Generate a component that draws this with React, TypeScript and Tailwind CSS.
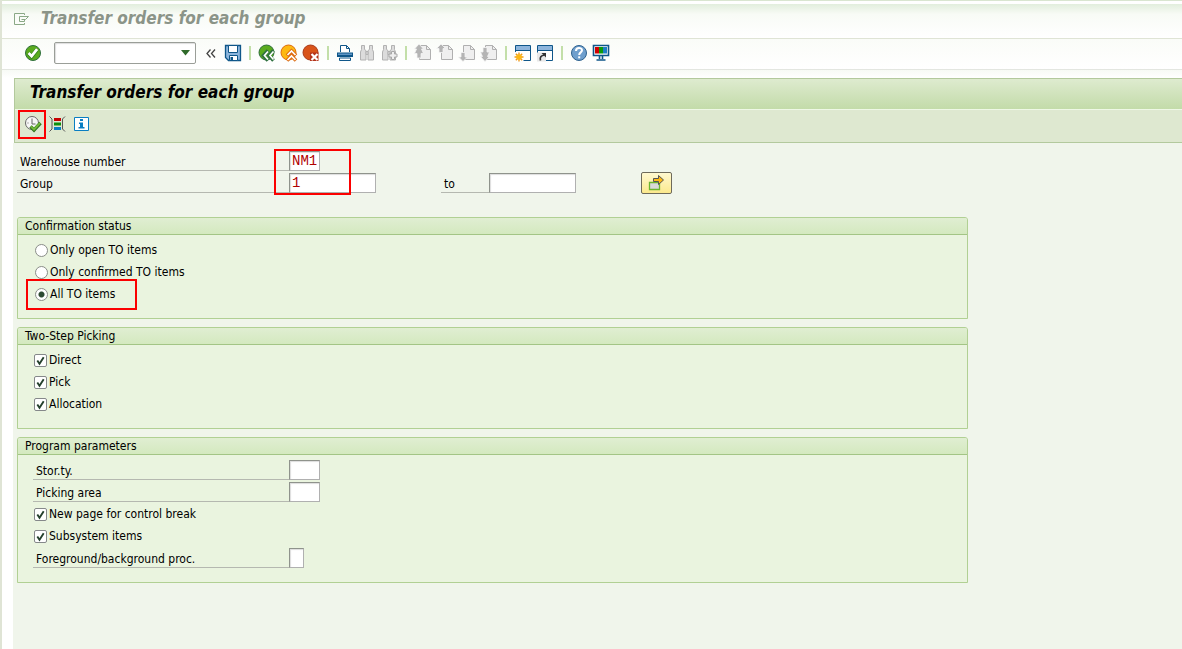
import type { ReactNode } from "react";

function Icon({ children }: { children: ReactNode }) {
  return (
    <svg width="18" height="18" viewBox="0 0 18 18" fill="none" aria-hidden="true" className="shrink-0">
      {children}
    </svg>
  );
}

const CheckIcon = () => (
  <Icon>
    <circle cx="9" cy="9" r="7.5" fill="#5aab1e" stroke="#2f6f3c" />
    <path d="M4.5 9.2l3 3.2 5.6-7" stroke="#2f7d1c" strokeWidth="4" />
    <path d="M4.6 9l3 3.2 5.5-7" stroke="#fff" strokeWidth="2.8" />
  </Icon>
);

const CollapseIcon = () => (
  <Icon>
    <path d="M8.500 5.500L5 9.500l3.500 4M13 5.500l-3.500 4 3.500 4" stroke="#444" strokeWidth="1.300" />
  </Icon>
);

const SaveIcon = () => (
  <Icon>
    <path d="M1.500 1.500h15v15h-12l-3-3z" fill="#8db5dc" stroke="#0f5689" strokeWidth="1.300" />
    <path d="M4.500 1.500h9v7h-9z" fill="#fff" stroke="#0f5689" />
    <path d="M5.500 11.500h8v5h-8z" fill="#fff" stroke="#0f5689" />
    <path d="M6.500 13h2.500v3.500h-2.500z" fill="#0f5689" />
  </Icon>
);

const BackIcon = () => (
  <Icon>
    <circle cx="8.500" cy="8.500" r="7.500" fill="#5aab1e" stroke="#2f6f3c" />
    <path d="M10 6.500L5.500 11.500l4.500 5M15.500 6.500L11 11.500l4.500 5" stroke="#2f7040" strokeWidth="3.600" />
    <path d="M10 7.500l-3.500 4 3.500 4M15.500 7.500l-3.500 4 3.500 4" stroke="#fff" strokeWidth="1.700" />
  </Icon>
);

const ExitIcon = () => (
  <Icon>
    <circle cx="8.500" cy="8.500" r="7.500" fill="#fdb913" stroke="#dd6b10" />
    <path d="M7 11.500l4.500-4.500 4.500 4.500M7 16.500l4.500-4.500 4.500 4.500" stroke="#dd6b10" strokeWidth="3.600" />
    <path d="M7.500 11l4-4 4 4M7.500 16l4-4 4 4" stroke="#fff" strokeWidth="1.700" />
  </Icon>
);

const CancelIcon = () => (
  <Icon>
    <circle cx="8.500" cy="8.500" r="7.500" fill="#d9541a" stroke="#a83a1a" />
    <path d="M8 8.500h8.500V17H8z" fill="#b4341a" />
    <path d="M9.500 10l6 6M15.500 10l-6 6" stroke="#fff" strokeWidth="2.200" />
  </Icon>
);

const PrintIcon = () => (
  <Icon>
    <path d="M4.500 8V1.500h6l3 3V8" fill="#fff" stroke="#0f5689" />
    <path d="M10.500 1.500v3h3" stroke="#0f5689" />
    <path d="M1 8.500h16v4.500H1z" fill="#0f5689" />
    <path d="M2 9.500h14v1.500H2z" fill="#5d94c4" />
    <path d="M3.500 14h11v2.500h-11z" fill="#fff" stroke="#0f5689" />
  </Icon>
);

const Binoculars = () => (
  <g fill="#dcdcdc" stroke="#b2b2b2">
    <path d="M3.500 1.500h3v4l1.500 1v9.500h-5.500v-8l1-2.500z" />
    <path d="M14.500 1.500h-3v4l-1.500 1v9.500h5.500v-8l-1-2.500z" />
    <path d="M8 7.500h2v3H8z" />
  </g>
);

const FindIcon = () => (
  <Icon>
    <Binoculars />
  </Icon>
);

const FindNextIcon = () => (
  <Icon>
    <Binoculars />
    <path d="M11.500 7.500h3v2.500h2.500v3h-2.500v2.500h-3v-2.500H9v-3h2.500z" fill="#eee" stroke="#a8a8a8" />
  </Icon>
);

function PageIcon({ arrows }: { arrows: string }) {
  return (
    <Icon>
      <path d="M5.500 1.500h7l4 4v10h-11z" fill="#efefef" stroke="#b0b0b0" />
      <path d="M12.500 1.500v4h4" stroke="#b0b0b0" />
      <path d={arrows} fill="#b4b4b4" stroke="#f5f5f5" strokeWidth="0.800" />
    </Icon>
  );
}

const WindowBase = () => (
  <>
    <path d="M1.500 1.500h15v15h-15z" fill="#fff" stroke="#0f5689" />
    <path d="M2 2h14v4H2z" fill="#8db5dc" />
    <path d="M1.500 6.500h15" stroke="#0f5689" />
  </>
);

const NewSessionIcon = () => (
  <Icon>
    <WindowBase />
    <path d="M0 8h9.500v10H0z" fill="#fff" />
    <path d="M5 8.500v9M.5 13h9M1.800 9.800l6.400 6.400M8.200 9.800l-6.400 6.400" stroke="#f09a1a" strokeWidth="1.400" />
    <circle cx="5" cy="13" r="2.800" fill="#fdb913" />
  </Icon>
);

const ShortcutIcon = () => (
  <Icon>
    <WindowBase />
    <path d="M1 8.500h9v9H1z" fill="#e8e8e8" />
    <path d="M4.500 16.500c-1-3 .5-5 4-5.500" stroke="#333" strokeWidth="1.700" />
    <path d="M5.500 9H10v4.500z" fill="#333" />
  </Icon>
);

const HelpIcon = () => (
  <Icon>
    <circle cx="9" cy="9" r="7.500" fill="#6f9fcd" stroke="#2f628f" />
    <path d="M6 7c0-4 6-3.800 6-.7C12 8.500 9.200 8.300 9.200 11" stroke="#fff" strokeWidth="2" />
    <path d="M8.200 12.300h2v2h-2z" fill="#fff" />
  </Icon>
);

const MonitorIcon = () => (
  <Icon>
    <path d="M1.500 1.500h15v10h-15z" fill="#fff" stroke="#0f5689" strokeWidth="1.600" />
    <path d="M3 3h4v6.500H3z" fill="#d00000" />
    <path d="M7 3h4v6.500H7z" fill="#0d9a0d" />
    <path d="M11 3h4v6.500h-4z" fill="#1f7fc4" />
    <path d="M7.500 12v3M10.500 12v3M4.500 16h9" stroke="#0f5689" strokeWidth="1.600" />
  </Icon>
);

const ExecuteIcon = () => (
  <Icon>
    <circle cx="8" cy="8" r="6.500" fill="#f7f7f7" stroke="#666" />
    <path d="M8 3.500V9h3.500M3.500 8h1M8 12v1.500" stroke="#666" />
    <path d="M6.500 11.500l3.500 3.500 6.500-7" stroke="#2f6f1c" strokeWidth="3.400" />
    <path d="M7 11.500l3 3 6-6.500" stroke="#72b83a" strokeWidth="2" />
  </Icon>
);

const VariantIcon = () => (
  <Icon>
    <path d="M1.500 1.500l2.500 2.500v10l-2.500 2.500M17 1.500L14.500 4v10l2.500 2.500" stroke="#555" />
    <path d="M6 3h7v3H6z" fill="#c80000" />
    <path d="M6 7.500h7v3H6z" fill="#0b8f0b" />
    <path d="M6 12h7v3H6z" fill="#0a7ec2" />
  </Icon>
);

const InfoIcon = () => (
  <Icon>
    <path d="M2.500 2.500h14v13h-14z" fill="#fff" stroke="#0a7ec2" />
    <path d="M8 4h3v2H8zM7 7.500h4V12h1.500v1.500h-6V12H8V9H7z" fill="#0a7ec2" />
  </Icon>
);

const MultipleIcon = () => (
  <Icon>
    <path d="M1.500 8.500h10v7h-10z" fill="#d9d9d9" stroke="#6cb52d" strokeWidth="1.300" />
    <path d="M5.500 4.500h5v-3l5 4.500-5 4.500v-3h-5z" fill="#fdb913" stroke="#555" />
  </Icon>
);

const UP = "M5 0L9.500 4.500H7V8.500H3V4.500H.5z";
const DOWN = "M5 17.500L.5 13H3V8.500h4V13h2.500z";
const DOUBLE_UP = "M5 0L9.500 5H7.500l2 4.500H7V14H3V9.500H.5L2.500 5H.5z";
const DOUBLE_DOWN = "M5 17.500L.5 12.500h2L.5 8H3V3.500h4V8h2.500l-2 4.500h2z";

const toolbarGroups = [
  [
    { name: "Back", icon: <BackIcon /> },
    { name: "Exit", icon: <ExitIcon /> },
    { name: "Cancel", icon: <CancelIcon /> },
  ],
  [
    { name: "Print", icon: <PrintIcon /> },
    { name: "Find", icon: <FindIcon />, disabled: true },
    { name: "Find next", icon: <FindNextIcon />, disabled: true },
  ],
  [
    { name: "First page", icon: <PageIcon arrows={DOUBLE_UP} />, disabled: true },
    { name: "Previous page", icon: <PageIcon arrows={UP} />, disabled: true },
    { name: "Next page", icon: <PageIcon arrows={DOWN} />, disabled: true },
    { name: "Last page", icon: <PageIcon arrows={DOUBLE_DOWN} />, disabled: true },
  ],
  [
    { name: "New session", icon: <NewSessionIcon /> },
    { name: "Create shortcut", icon: <ShortcutIcon /> },
  ],
  [
    { name: "Help", icon: <HelpIcon /> },
    { name: "Customize layout", icon: <MonitorIcon /> },
  ],
];

function ToolButton({ name, icon, disabled }: { name: string; icon: ReactNode; disabled?: boolean }) {
  return (
    <button type="button" aria-label={name} disabled={disabled} className="flex h-6 w-[22px] shrink-0 items-center justify-center">
      {icon}
    </button>
  );
}

const fieldClass =
  "h-5 border border-[#b0b0b0] border-t-[#8f938c] border-l-[#8f938c] bg-white px-0.5 font-['Liberation_Mono',monospace] text-[14px] text-[#b00000] shadow-[inset_1px_1px_1px_#dddddd] outline-none";

const fieldWidths = { flag: "w-[15px]", short: "w-[31px]", long: "w-[87px]" };

function Field({ id, label, size, value = "" }: { id: string; label: string; size: keyof typeof fieldWidths; value?: string }) {
  return (
    <div className="flex h-[22px] flex-1 items-center">
      <label htmlFor={id} className="h-5 flex-1 border-b border-[#b5b8b0] pl-[3px] leading-[22px]">
        {label}
      </label>
      <input id={id} defaultValue={value} className={`${fieldClass} ${fieldWidths[size]}`} />
    </div>
  );
}

function Radio({ label, checked }: { label: string; checked?: boolean }) {
  return (
    <label className="flex h-[22px] w-fit items-center gap-0.5 pl-0.5">
      <input
        type="radio"
        name="confirmation"
        defaultChecked={checked}
        className="size-[13px] appearance-none rounded-full border border-[#8a8d88] bg-white checked:bg-[radial-gradient(circle,#2d4a32_0_2.5px,#ffffff_3.5px)]"
      />
      {label}
    </label>
  );
}

function Check({ label }: { label: string }) {
  return (
    <label className="flex h-[22px] w-fit items-center gap-0.5 pl-px">
      <span className="grid">
        <input type="checkbox" defaultChecked className="peer col-start-1 row-start-1 size-[13px] appearance-none rounded-[2px] border border-[#85888a] bg-white" />
        <svg viewBox="0 0 13 13" fill="none" aria-hidden="true" className="pointer-events-none invisible col-start-1 row-start-1 size-[13px] peer-checked:visible">
          <path d="M3.300 6.500l2.200 3.200 4.200-6.500" stroke="#24402c" strokeWidth="1.900" />
        </svg>
      </span>
      {label}
    </label>
  );
}

function Group({ title, children }: { title: string; children: ReactNode }) {
  return (
    <fieldset className="min-w-0 rounded-t-[3px] border border-[#b1d093] bg-[#eaf4df] pb-[13px]">
      <legend className="float-left mb-[3px] h-[17px] w-full rounded-t-[2px] border-b border-[#a3c585] bg-linear-to-b from-[#e0eed2] to-[#d4e9bf] pl-[7px] leading-4">
        {title}
      </legend>
      <div className="clear-both pt-px pl-[15px]">{children}</div>
    </fieldset>
  );
}

function Highlight({ className }: { className: string }) {
  return <span aria-hidden="true" className={`pointer-events-none absolute border-2 border-[#fb0000] ${className}`} />;
}

export default function App() {
  return (
    <div className="flex min-h-screen flex-col border-l-2 border-[#dfe4d5] bg-white font-['DejaVu_Sans_Condensed','Noto_Sans',sans-serif] text-[12px] text-black">
      <header className="border-t border-b border-t-[#d9e5d0] border-b-[#dfe4d5] pt-[3px]">
        <div className="flex h-[34px] items-center gap-[11px] bg-linear-to-b from-[#e2eedd] via-[#f8fbf6] via-30% to-white pb-1 pl-3">
          <svg width="16" height="14" viewBox="0 0 16 14" fill="none" aria-hidden="true">
            <path d="M10.500 3V1.500H.500v11h10V11" stroke="#8aa886" />
            <path d="M10.500 9.500h-5v-5h9l-3 3h-4M10.500 7.500v2" stroke="#8aa886" />
          </svg>
          <p className="text-[17px] font-bold text-[#8b9488] italic">Transfer orders for each group</p>
        </div>
      </header>

      <nav aria-label="System toolbar" className="flex h-[31px] items-center border-b border-[#e3e6e0] bg-linear-to-b from-[#fafcf8] to-white pb-0.5 pl-5">
        <ToolButton name="Enter" icon={<CheckIcon />} />
        <div className="mr-1 ml-2.5 flex h-[22px] w-[142px] items-center rounded-[2px] border border-[#9a9e98] bg-white shadow-[inset_1px_1px_1px_#dddddd]">
          <input aria-label="Command" className="min-w-0 flex-1 bg-transparent px-1 outline-none" />
          <button type="button" aria-label="Command history" className="flex h-5 w-5 items-center justify-center">
            <svg width="9" height="6" viewBox="0 0 9 6" aria-hidden="true">
              <path d="M0 0h9L4.500 5.500z" fill="#2f6a2a" />
            </svg>
          </button>
        </div>
        <ToolButton name="Collapse" icon={<CollapseIcon />} />
        <ToolButton name="Save" icon={<SaveIcon />} />
        {toolbarGroups.map((group) => (
          <div key={group[0].name} className="flex items-center">
            <span className="mx-[5px] h-3.5 w-0.5 bg-[#c3dfa9]" />
            {group.map((tool) => (
              <ToolButton key={tool.name} {...tool} />
            ))}
          </div>
        ))}
      </nav>

      <main className="flex flex-1 flex-col bg-linear-to-b from-[#f7faf5] to-white to-[8px] pt-2 pl-[11px]">
        <section className="ml-px border border-r-0 border-[#b3c99d] bg-[#dee8d0]">
          <h1 className="h-[31px] border-b border-[#eff8e6] bg-linear-to-b from-[#deebcf] to-[#c3dba9] pl-[15px] text-[17px] leading-[26px] font-bold italic">
            Transfer orders for each group
          </h1>
          <div className="flex h-8 items-center gap-0.5 pb-1 pl-[7px]">
            <div className="relative flex">
              <ToolButton name="Execute" icon={<ExecuteIcon />} />
              <Highlight className="-top-0.5 -left-1 h-[29px] w-[28px]" />
            </div>
            <ToolButton name="Get variant" icon={<VariantIcon />} />
            <ToolButton name="Information" icon={<InfoIcon />} />
          </div>
        </section>

        <div className="flex-1 bg-[#f0f5eb] pt-[7px] pb-8 pl-1">
          <form className="flex max-w-[951px] flex-col gap-2">
            <div className="relative mb-[15px] w-[655px]">
              <div className="flex w-[303px]">
                <Field id="warehouse" label="Warehouse number" size="short" value="NM1" />
              </div>
              <div className="flex items-center">
                <div className="flex w-[359px]">
                  <Field id="group-from" label="Group" size="long" value="1" />
                </div>
                <div className="ml-[65px] flex w-[135px]">
                  <Field id="group-to" label="to" size="long" />
                </div>
                <button
                  type="button"
                  aria-label="Multiple selection"
                  className="ml-[65px] flex h-[22px] w-[31px] items-center justify-center rounded-[2px] border border-[#6e6a5a] bg-linear-to-b from-[#fff8cf] to-[#fce98c]"
                >
                  <MultipleIcon />
                </button>
              </div>
              <Highlight className="-top-px left-[257px] h-[46px] w-[77px]" />
            </div>

            <Group title="Confirmation status">
              <Radio label="Only open TO items" />
              <Radio label="Only confirmed TO items" />
              <div className="relative w-fit">
                <Radio label="All TO items" checked />
                <Highlight className="-top-1 -left-[7px] h-[31px] w-[111px]" />
              </div>
            </Group>

            <Group title="Two-Step Picking">
              <Check label="Direct" />
              <Check label="Pick" />
              <Check label="Allocation" />
            </Group>

            <Group title="Program parameters">
              <div className="flex w-[287px]">
                <Field id="storage-type" label="Stor.ty." size="short" />
              </div>
              <div className="flex w-[287px]">
                <Field id="picking-area" label="Picking area" size="short" />
              </div>
              <Check label="New page for control break" />
              <Check label="Subsystem items" />
              <div className="flex w-[271px]">
                <Field id="processing" label="Foreground/background proc." size="flag" />
              </div>
            </Group>
          </form>
        </div>
      </main>
    </div>
  );
}
